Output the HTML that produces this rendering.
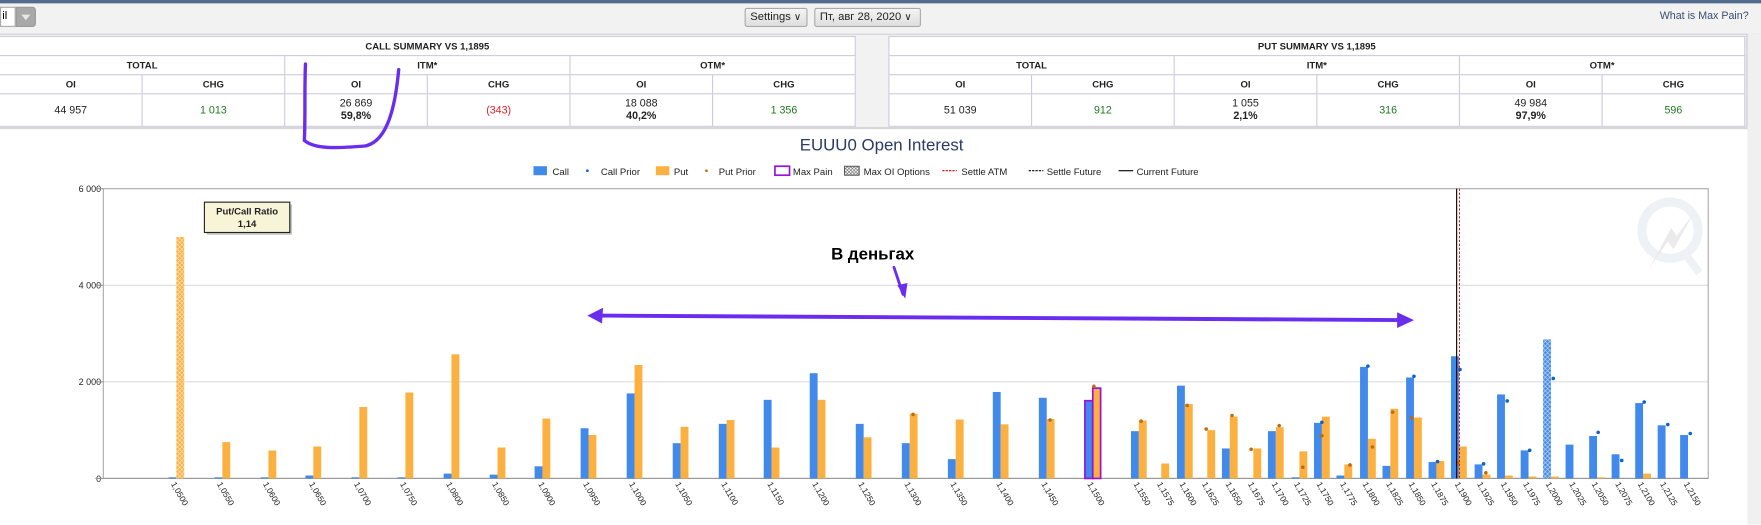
<!DOCTYPE html>
<html><head><meta charset="utf-8"><style>
*{margin:0;padding:0;box-sizing:border-box}
body{width:1761px;height:525px;overflow:hidden;background:#fff;font-family:"Liberation Sans",Arial,sans-serif}
#s{position:absolute;left:0;top:0;width:1568px;height:467px;transform:scale(1.12309);transform-origin:0 0;background:#f2f2f2}
.strip{position:absolute;left:0;top:0;width:1568px;height:3px;background:#536c8c}
.btn{position:absolute;top:7px;height:17px;border:1px solid #a9a9a9;border-radius:2px;background:linear-gradient(#f4f4f4,#dedede);font-size:10px;line-height:15px;padding:0 4px;color:#222}
table{position:absolute;border-collapse:collapse;background:#fff;font-size:8.5px;color:#222;table-layout:fixed}
td{border:1px solid #ccd;text-align:center;font-weight:bold;height:17px}
td.n{font-weight:normal;height:29px;font-size:9.5px;line-height:11px}
.g{color:#1f7a1f}.r{color:#e0202a}
#chart{position:absolute;left:0;top:113px;width:1556px;height:354px;background:#fff;border-top:2px solid #d8d8d8}
</style></head><body><div id="s">
<div class="strip"></div>
<div style="position:absolute;left:0;top:6px;width:14px;height:18px;background:#fff;border:1px solid #aaa;font-size:10px;line-height:16px;padding-left:1px">il</div>
<div style="position:absolute;left:14px;top:6px;width:18px;height:18px;background:#a8a8a8;border:1px solid #999;border-radius:0 3px 3px 0"><svg width="16" height="16"><path d="M4 6 L8 11 L12 6 Z" fill="#e8e8e8"/></svg></div>
<div class="btn" style="left:663px;width:56px">Settings <span style="font-size:9px">&#8744;</span></div>
<div class="btn" style="left:725px;width:95px">Пт, авг 28, 2020 <span style="font-size:9px">&#8744;</span></div>
<div style="position:absolute;right:11px;top:9px;font-size:9.5px;color:#3a4e6e">What is Max Pain?</div>
<div style="position:absolute;left:0;top:30px;width:1568px;height:1px;background:#d0d0d8"></div>
<table style="left:-1px;top:32px;width:763px">
<colgroup><col><col><col><col><col><col></colgroup>
<tr><td colspan="6">CALL SUMMARY VS 1,1895</td></tr>
<tr><td colspan="2">TOTAL</td><td colspan="2">ITM*</td><td colspan="2">OTM*</td></tr>
<tr><td>OI</td><td>CHG</td><td>OI</td><td>CHG</td><td>OI</td><td>CHG</td></tr>
<tr><td class="n">44 957</td><td class="n g">1 013</td><td class="n">26 869<br><b>59,8%</b></td><td class="n r">(343)</td><td class="n">18 088<br><b>40,2%</b></td><td class="n g">1 356</td></tr>
</table>
<table style="left:791px;top:32px;width:763px">
<colgroup><col><col><col><col><col><col></colgroup>
<tr><td colspan="6">PUT SUMMARY VS 1,1895</td></tr>
<tr><td colspan="2">TOTAL</td><td colspan="2">ITM*</td><td colspan="2">OTM*</td></tr>
<tr><td>OI</td><td>CHG</td><td>OI</td><td>CHG</td><td>OI</td><td>CHG</td></tr>
<tr><td class="n">51 039</td><td class="n g">912</td><td class="n">1 055<br><b>2,1%</b></td><td class="n g">316</td><td class="n">49 984<br><b>97,9%</b></td><td class="n g">596</td></tr>
</table>
<div style="position:absolute;left:1555px;top:30px;width:13px;height:437px;background:#f0f0f0;border-left:1px solid #ccc"></div>
<div id="chart"></div>
<svg style="position:absolute;left:0;top:0" width="1568" height="467" font-family="Liberation Sans, Arial, sans-serif">
<defs>
<pattern id="hp" width="4" height="4" patternUnits="userSpaceOnUse"><rect width="4" height="4" fill="#fbb040"/><path d="M0 0L4 4M4 0L0 4" stroke="#fff" stroke-width="0.5" opacity="0.8"/></pattern>
<pattern id="hc" width="4" height="4" patternUnits="userSpaceOnUse"><rect width="4" height="4" fill="#4189ea"/><path d="M0 0L4 4M4 0L0 4" stroke="#fff" stroke-width="0.5" opacity="0.8"/></pattern>
<pattern id="hg" width="3" height="3" patternUnits="userSpaceOnUse"><path d="M0 0L3 3M3 0L0 3" stroke="#555" stroke-width="0.5"/></pattern>
</defs>
<text x="785" y="134" text-anchor="middle" font-size="15" fill="#2b3a67">EUUU0 Open Interest</text>
<g font-size="8.5" fill="#222">
<rect x="475" y="148" width="12" height="8" fill="#4189ea"/><text x="492" y="156">Call</text>
<circle cx="523" cy="152" r="1.2" fill="#1060d0"/><text x="535" y="156">Call Prior</text>
<rect x="584" y="148" width="12" height="8" fill="#fbb040"/><text x="600" y="156">Put</text>
<circle cx="629" cy="152" r="1.2" fill="#c07010"/><text x="640" y="156">Put Prior</text>
<rect x="690" y="148" width="13" height="8" fill="none" stroke="#9a10e0" stroke-width="1.5"/><text x="706" y="156">Max Pain</text>
<rect x="752" y="148" width="13" height="8" fill="url(#hg)" stroke="#444" stroke-width="0.8"/><text x="769" y="156">Max OI Options</text>
<line x1="839" y1="152" x2="852" y2="152" stroke="#d00" stroke-dasharray="2,1"/><text x="856" y="156">Settle ATM</text>
<line x1="916" y1="152" x2="929" y2="152" stroke="#000" stroke-dasharray="2,1"/><text x="932" y="156">Settle Future</text>
<line x1="996" y1="152" x2="1009" y2="152" stroke="#000"/><text x="1012" y="156">Current Future</text>
</g>
<g stroke="#ddd" stroke-width="1"><line x1="92" y1="254" x2="1521" y2="254"/><line x1="92" y1="340" x2="1521" y2="340"/></g>
<rect x="92" y="168" width="1429" height="258" fill="none" stroke="#aaa"/>
<line x1="92" y1="426" x2="1521" y2="426" stroke="#999"/>
<g font-size="8" fill="#222" text-anchor="end"><text x="90" y="171">6 000</text><text x="90" y="257">4 000</text><text x="90" y="343">2 000</text><text x="90" y="429">0</text></g>
<g stroke="#999"><line x1="85" y1="168" x2="92" y2="168"/><line x1="85" y1="254" x2="92" y2="254"/><line x1="85" y1="340" x2="92" y2="340"/><line x1="85" y1="426" x2="92" y2="426"/></g>
<circle cx="1487" cy="205" r="25" fill="none" stroke="#eef1f5" stroke-width="8"/>
<path d="M1468 240 L1485 215 L1490 222 L1508 190 L1493 210 L1488 203 Z" fill="#ebebeb"/>
<line x1="1500" y1="225" x2="1513" y2="243" stroke="#eef1f5" stroke-width="7"/>
<g fill="#4189ea">
<rect x="150" y="425" width="7" height="1"/><rect x="191" y="425" width="7" height="1"/><rect x="232" y="425" width="7" height="1"/><rect x="272" y="423.4" width="7" height="2.6"/><rect x="313" y="425" width="7" height="1"/><rect x="354" y="425" width="7" height="1"/><rect x="395" y="421.7" width="7" height="4.3"/><rect x="436" y="422.6" width="7" height="3.4"/><rect x="476" y="415.2" width="7" height="10.8"/><rect x="517" y="381.3" width="7" height="44.7"/><rect x="558" y="350.3" width="7" height="75.7"/><rect x="599" y="394.6" width="7" height="31.4"/><rect x="640" y="377.4" width="7" height="48.6"/><rect x="680" y="356" width="7" height="70"/><rect x="721" y="332.3" width="7" height="93.7"/><rect x="762" y="377.4" width="7" height="48.6"/><rect x="803" y="394.6" width="7" height="31.4"/><rect x="844" y="408.8" width="7" height="17.2"/><rect x="884" y="349" width="7" height="77"/><rect x="925" y="354.2" width="7" height="71.8"/>
<rect x="1007" y="383.9" width="7" height="42.1"/><rect x="1048" y="343.4" width="7" height="82.6"/><rect x="1088" y="399.3" width="7" height="26.7"/><rect x="1129" y="383.9" width="7" height="42.1"/><rect x="1150" y="425" width="7" height="1"/><rect x="1170" y="376.5" width="7" height="49.5"/><rect x="1190" y="423.4" width="7" height="2.6"/><rect x="1211" y="326.7" width="7" height="99.3"/><rect x="1231" y="414.8" width="7" height="11.2"/><rect x="1252" y="336.1" width="7" height="89.9"/><rect x="1272" y="411.4" width="7" height="14.6"/><rect x="1292" y="317.2" width="7" height="108.8"/><rect x="1313" y="413.5" width="7" height="12.5"/><rect x="1333" y="351.2" width="7" height="74.8"/><rect x="1354" y="401" width="7" height="25"/><rect x="1394" y="395.9" width="7" height="30.1"/><rect x="1415" y="388.2" width="7" height="37.8"/><rect x="1435" y="404.5" width="7" height="21.5"/><rect x="1456" y="358.9" width="7" height="67.1"/><rect x="1476" y="378.7" width="7" height="47.3"/><rect x="1496" y="387.3" width="7" height="38.7"/>
</g>
<rect x="1374" y="302.2" width="7" height="123.8" fill="url(#hc)"/>
<rect x="966" y="356.8" width="7" height="69.2" fill="#4189ea" stroke="#9a10e0" stroke-width="1.5"/>
<g fill="#fbb040">
<rect x="198" y="393.7" width="7" height="32.3"/><rect x="239" y="401.1" width="7" height="24.9"/><rect x="279" y="397.6" width="7" height="28.4"/><rect x="320" y="362.4" width="7" height="63.6"/><rect x="361" y="349.5" width="7" height="76.5"/><rect x="402" y="315.5" width="7" height="110.5"/><rect x="443" y="398.5" width="7" height="27.5"/><rect x="483" y="372.7" width="7" height="53.3"/><rect x="524" y="387.3" width="7" height="38.7"/><rect x="565" y="325" width="7" height="101"/><rect x="606" y="380" width="7" height="46"/><rect x="647" y="374" width="7" height="52"/><rect x="687" y="398.5" width="7" height="27.5"/><rect x="728" y="356" width="7" height="70"/><rect x="769" y="389.4" width="7" height="36.6"/><rect x="810" y="368.4" width="7" height="57.6"/><rect x="851" y="373.5" width="7" height="52.5"/><rect x="891" y="377.8" width="7" height="48.2"/><rect x="932" y="373.1" width="7" height="52.9"/>
<rect x="1014" y="374.4" width="7" height="51.6"/><rect x="1034" y="412.7" width="7" height="13.3"/><rect x="1055" y="359.8" width="7" height="66.2"/><rect x="1075" y="383" width="7" height="43"/><rect x="1095" y="371" width="7" height="55"/><rect x="1116" y="399.3" width="7" height="26.7"/><rect x="1136" y="380.4" width="7" height="45.6"/><rect x="1157" y="401.9" width="7" height="24.1"/><rect x="1177" y="371" width="7" height="55"/><rect x="1197" y="413.5" width="7" height="12.5"/><rect x="1218" y="390.7" width="7" height="35.3"/><rect x="1238" y="364" width="7" height="62"/><rect x="1259" y="371.8" width="7" height="54.2"/><rect x="1279" y="410.5" width="7" height="15.5"/><rect x="1299" y="397.6" width="7" height="28.4"/><rect x="1320" y="422.6" width="7" height="3.4"/><rect x="1340" y="423.4" width="7" height="2.6"/><rect x="1361" y="424.3" width="7" height="1.7"/><rect x="1381" y="424.3" width="7" height="1.7"/><rect x="1422" y="425" width="7" height="1"/><rect x="1463" y="421.7" width="7" height="4.3"/>
</g>
<rect x="157" y="211" width="7" height="215" fill="url(#hp)"/>
<rect x="973" y="345.6" width="7" height="80.4" fill="#fbb040" stroke="#9a10e0" stroke-width="1.5"/>
<g fill="#c06a10"><circle cx="813" cy="369" r="1.6"/><circle cx="935" cy="374" r="1.6"/><circle cx="974" cy="344" r="1.6"/><circle cx="1016" cy="375" r="1.6"/><circle cx="1057" cy="361" r="1.6"/><circle cx="1074" cy="382" r="1.6"/><circle cx="1097" cy="370" r="1.6"/><circle cx="1114" cy="400" r="1.6"/><circle cx="1139" cy="379" r="1.6"/><circle cx="1160" cy="416" r="1.6"/><circle cx="1177" cy="388" r="1.6"/><circle cx="1202" cy="414" r="1.6"/><circle cx="1222" cy="398" r="1.6"/><circle cx="1240" cy="367" r="1.6"/><circle cx="1257" cy="372" r="1.6"/><circle cx="1298" cy="412" r="1.6"/><circle cx="1323" cy="421" r="1.6"/></g>
<g fill="#1060d0"><circle cx="1177" cy="376" r="1.6"/><circle cx="1218" cy="326" r="1.6"/><circle cx="1259" cy="335" r="1.6"/><circle cx="1280" cy="411" r="1.6"/><circle cx="1300" cy="329" r="1.6"/><circle cx="1321" cy="413" r="1.6"/><circle cx="1342" cy="357" r="1.6"/><circle cx="1362" cy="401" r="1.6"/><circle cx="1383" cy="337" r="1.6"/><circle cx="1423" cy="385" r="1.6"/><circle cx="1444" cy="410" r="1.6"/><circle cx="1464" cy="358" r="1.6"/><circle cx="1485" cy="378" r="1.6"/><circle cx="1505" cy="386" r="1.6"/></g>
<line x1="1297" y1="168" x2="1297" y2="426" stroke="#000" stroke-width="1"/>
<line x1="1299.5" y1="168" x2="1299.5" y2="426" stroke="#d00" stroke-width="0.8" stroke-dasharray="2,1.5"/>
<g fill="#f7f4d8" stroke="#222" stroke-width="1"><rect x="184" y="182" width="76" height="27" fill="#888" stroke="none" opacity="0.5"/><rect x="182" y="180" width="76" height="27"/></g>
<text x="220" y="191" text-anchor="middle" font-size="8.5" font-weight="bold" fill="#222">Put/Call Ratio</text>
<text x="220" y="202" text-anchor="middle" font-size="8.5" font-weight="bold" fill="#222">1,14</text>
<g font-size="7.5" fill="#222">
<text transform="translate(152,431) rotate(60)">1,0500</text><text transform="translate(193,431) rotate(60)">1,0550</text><text transform="translate(234,431) rotate(60)">1,0600</text><text transform="translate(275,431) rotate(60)">1,0650</text><text transform="translate(315,431) rotate(60)">1,0700</text><text transform="translate(356,431) rotate(60)">1,0750</text><text transform="translate(397,431) rotate(60)">1,0800</text><text transform="translate(438,431) rotate(60)">1,0850</text><text transform="translate(479,431) rotate(60)">1,0900</text><text transform="translate(519,431) rotate(60)">1,0950</text><text transform="translate(560,431) rotate(60)">1,1000</text><text transform="translate(601,431) rotate(60)">1,1050</text><text transform="translate(642,431) rotate(60)">1,1100</text><text transform="translate(683,431) rotate(60)">1,1150</text><text transform="translate(723,431) rotate(60)">1,1200</text><text transform="translate(764,431) rotate(60)">1,1250</text><text transform="translate(805,431) rotate(60)">1,1300</text><text transform="translate(846,431) rotate(60)">1,1350</text><text transform="translate(887,431) rotate(60)">1,1400</text><text transform="translate(927,431) rotate(60)">1,1450</text><text transform="translate(968,431) rotate(60)">1,1500</text>
<text transform="translate(1009,431) rotate(60)">1,1550</text><text transform="translate(1030,431) rotate(60)">1,1575</text><text transform="translate(1050,431) rotate(60)">1,1600</text><text transform="translate(1070,431) rotate(60)">1,1625</text><text transform="translate(1091,431) rotate(60)">1,1650</text><text transform="translate(1111,431) rotate(60)">1,1675</text><text transform="translate(1132,431) rotate(60)">1,1700</text><text transform="translate(1152,431) rotate(60)">1,1725</text><text transform="translate(1172,431) rotate(60)">1,1750</text><text transform="translate(1193,431) rotate(60)">1,1775</text><text transform="translate(1213,431) rotate(60)">1,1800</text><text transform="translate(1234,431) rotate(60)">1,1825</text><text transform="translate(1254,431) rotate(60)">1,1850</text><text transform="translate(1274,431) rotate(60)">1,1875</text><text transform="translate(1295,431) rotate(60)">1,1900</text><text transform="translate(1315,431) rotate(60)">1,1925</text><text transform="translate(1336,431) rotate(60)">1,1950</text><text transform="translate(1356,431) rotate(60)">1,1975</text><text transform="translate(1376,431) rotate(60)">1,2000</text><text transform="translate(1397,431) rotate(60)">1,2025</text><text transform="translate(1417,431) rotate(60)">1,2050</text><text transform="translate(1438,431) rotate(60)">1,2075</text><text transform="translate(1458,431) rotate(60)">1,2100</text><text transform="translate(1478,431) rotate(60)">1,2125</text><text transform="translate(1499,431) rotate(60)">1,2150</text>
</g>
<g stroke="#6a2df0" fill="none" stroke-linecap="round">
<path d="M272 57 C271 80 272 105 271 125 C280 133 300 132 325 130 C345 126 352 95 355 62" stroke-width="3"/>
<path d="M534 281 L1248 285" stroke-width="3.5"/>
<path d="M796 238 L804 262" stroke-width="2.5"/>
</g>
<g fill="#6a2df0"><path d="M523 281 L537 274 L536 288 Z"/><path d="M1259 285 L1244 278 L1244 292 Z"/><path d="M806 266 L799 254 L808 252 Z"/></g>
<text x="740" y="231" font-size="15" font-weight="bold" fill="#000">В деньгах</text>
</svg>
</div></body></html>
